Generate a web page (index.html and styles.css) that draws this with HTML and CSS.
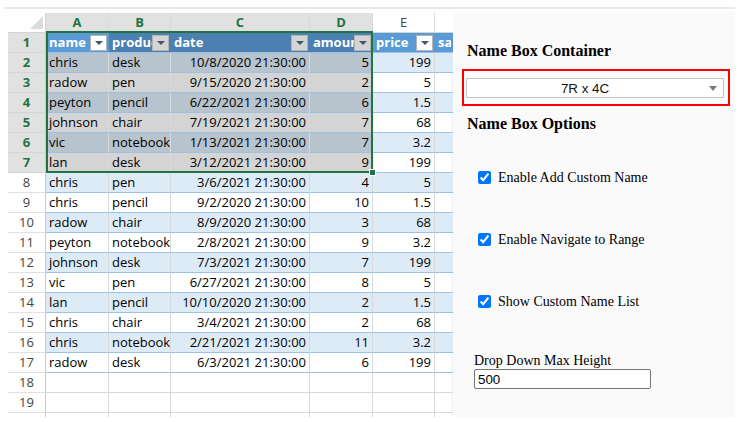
FILE: index.html
```html
<!DOCTYPE html>
<html>
<head>
<meta charset="utf-8">
<link rel="stylesheet" href="styles.css">
</head>
<body>
<div class="app">
  <div class="sheet">
    <div class="corner"><svg width="13" height="13" viewBox="0 0 13 13"><polygon points="13,0 13,13 0,13" fill="#dcdcdc"/></svg></div>
    <div class="ch on">A</div><div class="ch on">B</div><div class="ch on">C</div><div class="ch on">D</div><div class="ch">E</div><div class="ch last"></div>

    <div class="rh on">1</div>
    <div class="c th"><span class="lbl">name</span><span class="fb"></span></div>
    <div class="c th s"><span class="lbl">product</span><span class="fb"></span></div>
    <div class="c th s"><span class="lbl">date</span><span class="fb"></span></div>
    <div class="c th s"><span class="lbl">amount</span><span class="fb"></span></div>
    <div class="c th"><span class="lbl">price</span><span class="fb"></span></div>
    <div class="c th last"><span class="lbl">sales</span></div>

    <div class="rh on">2</div><div class="c t b s">chris</div><div class="c t b s">desk</div><div class="c t b s n">10/8/2020 21:30:00</div><div class="c t b s n">5</div><div class="c t b n">199</div><div class="c t b last"></div>
    <div class="rh on">3</div><div class="c t s">radow</div><div class="c t s">pen</div><div class="c t s n">9/15/2020 21:30:00</div><div class="c t s n">2</div><div class="c t n">5</div><div class="c t last"></div>
    <div class="rh on">4</div><div class="c t b s">peyton</div><div class="c t b s">pencil</div><div class="c t b s n">6/22/2021 21:30:00</div><div class="c t b s n">6</div><div class="c t b n">1.5</div><div class="c t b last"></div>
    <div class="rh on">5</div><div class="c t s">johnson</div><div class="c t s">chair</div><div class="c t s n">7/19/2021 21:30:00</div><div class="c t s n">7</div><div class="c t n">68</div><div class="c t last"></div>
    <div class="rh on">6</div><div class="c t b s">vic</div><div class="c t b s">notebook</div><div class="c t b s n">1/13/2021 21:30:00</div><div class="c t b s n">7</div><div class="c t b n">3.2</div><div class="c t b last"></div>
    <div class="rh on">7</div><div class="c t s">lan</div><div class="c t s">desk</div><div class="c t s n">3/12/2021 21:30:00</div><div class="c t s n">9</div><div class="c t n">199</div><div class="c t last"></div>
    <div class="rh">8</div><div class="c t b">chris</div><div class="c t b">pen</div><div class="c t b n">3/6/2021 21:30:00</div><div class="c t b n">4</div><div class="c t b n">5</div><div class="c t b last"></div>
    <div class="rh">9</div><div class="c t">chris</div><div class="c t">pencil</div><div class="c t n">9/2/2020 21:30:00</div><div class="c t n">10</div><div class="c t n">1.5</div><div class="c t last"></div>
    <div class="rh">10</div><div class="c t b">radow</div><div class="c t b">chair</div><div class="c t b n">8/9/2020 21:30:00</div><div class="c t b n">3</div><div class="c t b n">68</div><div class="c t b last"></div>
    <div class="rh">11</div><div class="c t">peyton</div><div class="c t">notebook</div><div class="c t n">2/8/2021 21:30:00</div><div class="c t n">9</div><div class="c t n">3.2</div><div class="c t last"></div>
    <div class="rh">12</div><div class="c t b">johnson</div><div class="c t b">desk</div><div class="c t b n">7/3/2021 21:30:00</div><div class="c t b n">7</div><div class="c t b n">199</div><div class="c t b last"></div>
    <div class="rh">13</div><div class="c t">vic</div><div class="c t">pen</div><div class="c t n">6/27/2021 21:30:00</div><div class="c t n">8</div><div class="c t n">5</div><div class="c t last"></div>
    <div class="rh">14</div><div class="c t b">lan</div><div class="c t b">pencil</div><div class="c t b n">10/10/2020 21:30:00</div><div class="c t b n">2</div><div class="c t b n">1.5</div><div class="c t b last"></div>
    <div class="rh">15</div><div class="c t">chris</div><div class="c t">chair</div><div class="c t n">3/4/2021 21:30:00</div><div class="c t n">2</div><div class="c t n">68</div><div class="c t last"></div>
    <div class="rh">16</div><div class="c t b">chris</div><div class="c t b">notebook</div><div class="c t b n">2/21/2021 21:30:00</div><div class="c t b n">11</div><div class="c t b n">3.2</div><div class="c t b last"></div>
    <div class="rh">17</div><div class="c t">radow</div><div class="c t">desk</div><div class="c t n">6/3/2021 21:30:00</div><div class="c t n">6</div><div class="c t n">199</div><div class="c t last"></div>
    <div class="rh">18</div><div class="c"></div><div class="c"></div><div class="c"></div><div class="c"></div><div class="c"></div><div class="c last"></div>
    <div class="rh">19</div><div class="c"></div><div class="c"></div><div class="c"></div><div class="c"></div><div class="c"></div><div class="c last"></div>
    <div class="rh end"></div><div class="c end"></div><div class="c end"></div><div class="c end"></div><div class="c end"></div><div class="c end"></div><div class="c end last"></div>

    <div class="sel"><div class="handle"></div></div>
  </div>

  <div class="panel">
    <div class="h h1">Name Box Container</div>
    <div class="namebox">
      <div class="select"><span class="val">7R x 4C</span><span class="arrow"></span></div>
    </div>
    <div class="h h2">Name Box Options</div>
    <label class="opt first"><input type="checkbox" checked><span>Enable Add Custom Name</span></label>
    <label class="opt"><input type="checkbox" checked><span>Enable Navigate to Range</span></label>
    <label class="opt"><input type="checkbox" checked><span>Show Custom Name List</span></label>
    <div class="fieldlabel">Drop Down Max Height</div>
    <input class="num" type="text" value="500">
  </div>
</div>
</body>
</html>
```
FILE: styles.css
```css
* { box-sizing: border-box; }
body { margin: 0; background: #fff; font-family: "Liberation Serif", "Times New Roman", serif; color: #000; }

.app {
  display: flex;
  width: 730px;
  margin: 7px 0 0 5px;
  padding: 4px 0 0 3px;
  border-top: 2px solid #e8e8e8;
}

/* ---------- spreadsheet ---------- */
.sheet {
  position: relative;
  display: grid;
  grid-template-columns: 38px 63px 62px 139px 63px 62px 18px;
  grid-template-rows: repeat(20, 20px) 4px;
  width: 445px;
  flex: none;
  font-family: "Open Sans", sans-serif;
  font-size: 13px;
  line-height: 19px;
  color: #000;
}
.corner {
  display: flex;
  align-items: flex-end;
  justify-content: flex-end;
  padding: 0 2px 3px 0;
  border-right: 1px solid #d4d4d4;
  border-bottom: 1px solid #d4d4d4;
}
.corner svg { display: block; }
.ch {
  text-align: center;
  color: #444;
  background: #fff;
  border-right: 1px solid #d9d9d9;
  border-bottom: 1px solid #d4d4d4;
}
.rh {
  text-align: center;
  color: #444;
  background: #fff;
  border-right: 1px solid #c8c8c8;
  border-bottom: 1px solid #e1e1e1;
}
.ch.on, .rh.on {
  background: #e1e1e1;
  color: #217346;
  font-weight: 700;
}
.rh.on { border-bottom-color: #d6d6d6; }

.c {
  padding: 0 3px;
  white-space: nowrap;
  overflow: hidden;
  border-right: 1px solid #d9d9d9;
  border-bottom: 1px solid #d9d9d9;
}
.t { border-bottom-color: #9bc2e6; }
.b { background: #ddebf7; }
.n { text-align: right; padding-right: 3px; }
.s { box-shadow: inset 0 0 0 60px rgba(0, 0, 0, 0.17); }
.last { border-right: 0; }
.end { border-bottom: 0; }

.th {
  display: flex;
  align-items: center;
  padding: 0 2px 0 3px;
  background: #5b9bd5;
  color: #fff;
  font-weight: 700;
  border-right: 0;
  border-bottom-color: #9bc2e6;
}
.th .lbl { flex: 1; min-width: 0; overflow: hidden; }
.fb {
  flex: none;
  width: 17px;
  height: 16px;
  margin-top: 1px;
  display: flex;
  align-items: center;
  justify-content: center;
  background: #fff;
  border: 1px solid #b4b4b4;
}
.fb::after {
  content: "";
  width: 0;
  height: 0;
  border-left: 4px solid transparent;
  border-right: 4px solid transparent;
  border-top: 4px solid #44546a;
}
.s .fb { background: #d4d4d4; }

.sel {
  position: absolute;
  left: 38px;
  top: 18px;
  width: 327px;
  height: 142px;
  border: 2px solid #217346;
  pointer-events: none;
}
.handle {
  position: absolute;
  right: -5px;
  bottom: -5px;
  width: 7px;
  height: 7px;
  background: #217346;
  border: 1px solid #fff;
}

/* ---------- panel ---------- */
.panel {
  width: 282px;
  height: 404px;
  flex: none;
  padding-left: 9px;
  background: #fafafa;
  box-shadow: -1px 0 2px rgba(0, 0, 0, 0.07);
}
.h {
  font-size: 16px;
  font-weight: 700;
  line-height: 20px;
  margin-left: 5px;
}
.h1 { margin-top: 28px; }
.h2 { margin-top: 8px; }

.namebox {
  margin-top: 8px;
  width: 268px;
  height: 37px;
  padding: 7px 4px 6px 2px;
  border: 2px solid #f00;
}
.select {
  display: flex;
  align-items: center;
  height: 20px;
  background: #fff;
  border: 1px solid #c4c4c4;
  font-family: "Liberation Sans", Arial, sans-serif;
  font-size: 13.33px;
  color: #111;
}
.select .val { flex: 1; text-align: center; }
.select .arrow {
  flex: none;
  width: 20px;
  display: flex;
  justify-content: center;
}
.select .arrow::after {
  content: "";
  border-left: 4px solid transparent;
  border-right: 4px solid transparent;
  border-top: 5px solid #7a7a7a;
}

.opt {
  display: flex;
  align-items: center;
  height: 20px;
  margin: 42px 0 0 16px;
  font-size: 14px;
}
.opt.first { margin-top: 33px; }
.opt input {
  width: 13px;
  height: 13px;
  margin: 0 7px 0 0;
}
.opt span { padding-top: 2px; }

.fieldlabel {
  margin: 42px 0 0 12px;
  font-size: 14px;
  line-height: 16px;
}
.num {
  display: block;
  margin-left: 12px;
  width: 177px;
  height: 20px;
  padding: 0 3px;
  border: 1px solid #767676;
  border-radius: 2px;
  background: #fff;
  font-family: "Liberation Sans", Arial, sans-serif;
  font-size: 13.33px;
  color: #000;
}
```
